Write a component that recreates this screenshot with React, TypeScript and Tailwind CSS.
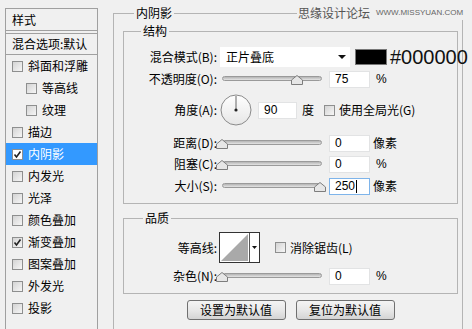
import React from "react";

function Check({ checked = false, white = false }: { checked?: boolean; white?: boolean }) {
  return (
    <div
      className={
        "w-[11px] h-[11px] border border-[#8e8f8f] flex items-center justify-center shrink-0 " +
        (white ? "bg-white" : "bg-gradient-to-br from-[#d4d4d4] to-[#f6f6f6]")
      }
    >
      {checked && (
        <svg width="9" height="9" viewBox="0 0 9 9">
          <path d="M1.5 4.5 L3.5 7 L7.5 1.5" fill="none" stroke="#222" strokeWidth="1.6" />
        </svg>
      )}
    </div>
  );
}

function ListItem({ label, checked = false, indent = false, active = false }: { label: string; checked?: boolean; indent?: boolean; active?: boolean }) {
  return (
    <div
      className={
        "h-[22px] flex items-center " +
        (indent ? "pl-[20px] " : "pl-[6px] ") +
        (active ? "bg-[#3399ff] text-white" : "text-black")
      }
    >
      <Check checked={checked} white={active} />
      <span className="ml-[5px] leading-none">{label}</span>
    </div>
  );
}

function Thumb() {
  return (
    <svg width="12" height="10" viewBox="0 0 12 10">
      <polygon points="6,0.5 11.5,5 11.5,9.5 0.5,9.5 0.5,5" fill="#e6e6e6" stroke="#7d7d7d" />
    </svg>
  );
}

function Slider({ pct }: { pct: number }) {
  return (
    <div className="relative w-[110px] h-[18px] shrink-0">
      <div className="absolute left-[5px] top-[6px] w-[100px] h-[5px] rounded-full border border-[#9a9a9a] bg-gradient-to-b from-[#b4b4b4] to-[#e4e4e4]" />
      <div className="absolute top-[5px]" style={{ left: 5 + pct - 6 }}>
        <Thumb />
      </div>
    </div>
  );
}

function Input({ value, w = 41, focus = false }: { value: string; w?: number; focus?: boolean }) {
  return (
    <div
      className={
        "h-[17px] bg-white border flex items-center pl-[5px] text-[12px] leading-none shrink-0 font-['Liberation_Sans',sans-serif] " +
        (focus ? "border-[#7eb4ea]" : "border-[#e2e3e4]")
      }
      style={{ width: w }}
    >
      <span>{value}</span>
      {focus && <span className="w-px h-[13px] bg-black ml-[1px]" />}
    </div>
  );
}

function Label({ text }: { text: string }) {
  return <div className="w-[93px] text-right shrink-0 leading-none">{text}</div>;
}

function GroupLabel({ text, left }: { text: string; left: number }) {
  return (
    <div className="absolute top-[-9px] h-[16px] leading-[16px] px-[2px] bg-[#f0f0f0]" style={{ left }}>
      {text}
    </div>
  );
}

export default function App() {
  return (
    <div className="w-[472px] h-[329px] bg-[#f0f0f0] flex overflow-hidden text-[12px] text-black font-['Noto_Sans_CJK_SC',sans-serif]">
      {/* left list */}
      <div className="ml-[5px] mt-[8px] w-[93px] h-[330px] border-l border-r border-[#a0a0a0] flex flex-col shrink-0">
        <div className="h-[23px] border-t border-b border-[#a0a0a0] flex items-center pl-[6px] leading-none">样式</div>
        <div className="mt-[2px] h-[22px] border-t border-b border-[#a0a0a0] flex items-center pl-[6px] leading-none">混合选项:默认</div>
        <ListItem label="斜面和浮雕" />
        <ListItem label="等高线" indent />
        <ListItem label="纹理" indent />
        <ListItem label="描边" />
        <ListItem label="内阴影" checked active />
        <ListItem label="内发光" />
        <ListItem label="光泽" />
        <ListItem label="颜色叠加" />
        <ListItem label="渐变叠加" checked />
        <ListItem label="图案叠加" />
        <ListItem label="外发光" />
        <ListItem label="投影" />
      </div>

      {/* main */}
      <div className="relative ml-[15px] mt-[13px] w-[350px] h-[340px] border border-[#b4b4b4] pl-[9px] pr-[4px] pt-[17px] shrink-0">
        <GroupLabel text="内阴影" left={20} />
        <div className="absolute left-[183px] top-[-8px] h-[14px] bg-[#f0f0f0] flex items-center gap-[6px] pl-[1px] w-[170px]">
          <span className="text-[12px] leading-none text-[#555]">思缘设计论坛</span>
          <span className="text-[8px] leading-none text-[#666] font-['Liberation_Sans',sans-serif]">WWW.MISSYUAN.COM</span>
        </div>

        {/* 结构 */}
        <div className="relative w-[335px] border border-[#b4b4b4] pt-[15px] pb-[8px]">
          <GroupLabel text="结构" left={17} />
          <div className="flex items-center h-[20px]">
            <Label text="混合模式(B):" />
            <div className="ml-[3px] w-[130px] h-[20px] bg-white flex items-center pl-[6px] relative shrink-0">
              <span className="leading-none">正片叠底</span>
              <svg className="absolute right-[4px] top-[8px]" width="8" height="4" viewBox="0 0 8 4">
                <polygon points="0,0 8,0 4,4" fill="#111" />
              </svg>
            </div>
            <div className="ml-[5px] w-[32px] h-[16px] bg-black border border-[#777] shrink-0" />
            <span className="ml-[3px] text-[20px] leading-none text-[#111] font-['Liberation_Sans',sans-serif] whitespace-nowrap">#000000</span>
          </div>

          <div className="flex items-center h-[18px] mt-[3px]">
            <Label text="不透明度(O):" />
            <Slider pct={75} />
            <div className="ml-[2px]"><Input value="75" /></div>
            <span className="ml-[6px] leading-none font-['Liberation_Sans',sans-serif]">%</span>
          </div>

          <div className="flex items-center h-[32px] mt-[6px]">
            <Label text="角度(A):" />
            <svg className="ml-[3px] shrink-0" width="32" height="32" viewBox="0 0 32 32">
              <defs>
                <linearGradient id="dial" x1="0" y1="0" x2="0" y2="1">
                  <stop offset="0" stopColor="#ffffff" />
                  <stop offset="1" stopColor="#e6e6e6" />
                </linearGradient>
              </defs>
              <circle cx="16" cy="16" r="15" fill="url(#dial)" stroke="#8a8a8a" />
              <line x1="16" y1="16" x2="16" y2="2" stroke="#666" strokeWidth="1" />
              <circle cx="16" cy="16" r="1.6" fill="#222" />
            </svg>
            <div className="ml-[6px]"><Input value="90" w={39} /></div>
            <span className="ml-[5px] leading-none">度</span>
            <div className="ml-[10px]"><Check /></div>
            <span className="ml-[4px] leading-none">使用全局光(G)</span>
          </div>

          <div className="flex items-center h-[18px] mt-[8px]">
            <Label text="距离(D):" />
            <Slider pct={0} />
            <div className="ml-[2px]"><Input value="0" /></div>
            <span className="ml-[3px] leading-none">像素</span>
          </div>

          <div className="flex items-center h-[18px] mt-[3px]">
            <Label text="阻塞(C):" />
            <Slider pct={0} />
            <div className="ml-[2px]"><Input value="0" /></div>
            <span className="ml-[6px] leading-none font-['Liberation_Sans',sans-serif]">%</span>
          </div>

          <div className="flex items-center h-[18px] mt-[4px]">
            <Label text="大小(S):" />
            <Slider pct={98} />
            <div className="ml-[2px]"><Input value="250" focus /></div>
            <span className="ml-[3px] leading-none">像素</span>
          </div>
        </div>

        {/* 品质 */}
        <div className="relative w-[335px] mt-[14px] border border-[#b4b4b4] pt-[13px] pb-[8px]">
          <GroupLabel text="品质" left={19} />
          <div className="flex items-center h-[31px]">
            <Label text="等高线:" />
            <svg className="ml-[2px] shrink-0" width="41" height="31" viewBox="0 0 41 31">
              <rect x="0.5" y="0.5" width="40" height="30" fill="#fff" stroke="#333" />
              <polygon points="2,29 29,2 29,29" fill="#a9a9a9" />
              <line x1="30.5" y1="1" x2="30.5" y2="30" stroke="#555" />
              <polygon points="33,14 38,14 35.5,17" fill="#111" />
            </svg>
            <div className="ml-[15px]"><Check /></div>
            <span className="ml-[4px] leading-none">消除锯齿(L)</span>
          </div>
          <div className="flex items-center h-[18px] mt-[4px]">
            <Label text="杂色(N):" />
            <Slider pct={0} />
            <div className="ml-[2px]"><Input value="0" /></div>
            <span className="ml-[6px] leading-none font-['Liberation_Sans',sans-serif]">%</span>
          </div>
        </div>

        <div className="w-[335px] flex justify-center gap-[10px] mt-[6px]">
          <div className="w-[99px] h-[20px] border border-[#707070] rounded-[3px] bg-gradient-to-b from-[#f4f4f4] via-[#e8e8e8] to-[#d4d4d4] flex items-center justify-center leading-none">设置为默认值</div>
          <div className="w-[99px] h-[20px] border border-[#707070] rounded-[3px] bg-gradient-to-b from-[#f4f4f4] via-[#e8e8e8] to-[#d4d4d4] flex items-center justify-center leading-none">复位为默认值</div>
        </div>
      </div>
    </div>
  );
}
